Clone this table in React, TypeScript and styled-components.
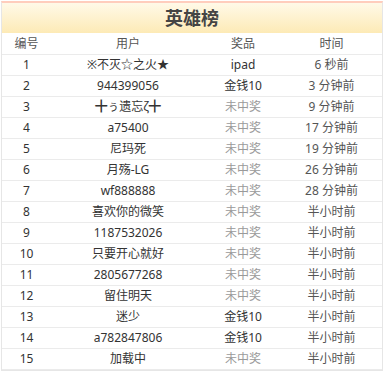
import styled, { createGlobalStyle } from 'styled-components';

type Row = { user: string; prize: string; time: string };

const rows: Row[] = [
  { user: '※不灭☆之火★', prize: 'ipad', time: '6 秒前' },
  { user: '944399056', prize: '金钱10', time: '3 分钟前' },
  { user: '╋ぅ遗忘ζ╋', prize: '未中奖', time: '9 分钟前' },
  { user: 'a75400', prize: '未中奖', time: '17 分钟前' },
  { user: '尼玛死', prize: '未中奖', time: '19 分钟前' },
  { user: '月殇-LG', prize: '未中奖', time: '26 分钟前' },
  { user: 'wf888888', prize: '未中奖', time: '28 分钟前' },
  { user: '喜欢你的微笑', prize: '未中奖', time: '半小时前' },
  { user: '1187532026', prize: '未中奖', time: '半小时前' },
  { user: '只要开心就好', prize: '未中奖', time: '半小时前' },
  { user: '2805677268', prize: '未中奖', time: '半小时前' },
  { user: '留住明天', prize: '未中奖', time: '半小时前' },
  { user: '迷少', prize: '金钱10', time: '半小时前' },
  { user: 'a782847806', prize: '金钱10', time: '半小时前' },
  { user: '加载中', prize: '未中奖', time: '半小时前' },
];

const GlobalStyle = createGlobalStyle`
  body {
    margin: 0;
    background: #ffffff;
    font-family: "Noto Sans", "Noto Sans CJK SC", sans-serif;
  }
`;

export default function App() {
  return (
    <>
      <GlobalStyle />
      <Board>
        <Title>英雄榜</Title>
        <HeadRow>
          <Cell>编号</Cell>
          <Cell>用户</Cell>
          <Cell>奖品</Cell>
          <Cell>时间</Cell>
        </HeadRow>
        {rows.map((r, i) => (
          <DataRow key={i}>
            <Cell>{i + 1}</Cell>
            <Cell>{r.user}</Cell>
            <Cell muted={r.prize === '未中奖'}>{r.prize}</Cell>
            <TimeCell>{r.time}</TimeCell>
          </DataRow>
        ))}
      </Board>
    </>
  );
}

const Board = styled.div`
  width: 380px;
  margin: 1px 0 0 1px;
  border: 1px solid #e6e6e6;
  border-top: 2px solid #ffcdbd;
`;

const Title = styled.div`
  height: 30px;
  line-height: 30px;
  text-align: center;
  font-size: 18px;
  font-weight: 700;
  color: #444444;
  background: linear-gradient(#fff9e8, #fdeab6);
`;

const HeadRow = styled.div`
  display: grid;
  grid-template-columns: 49px 154px 76px 1fr;
  height: 21px;
  line-height: 21px;
  border-bottom: 1px solid #ebebeb;
  font-size: 12px;
  color: #555555;
`;

const DataRow = styled.div`
  display: grid;
  grid-template-columns: 49px 154px 76px 1fr;
  height: 20px;
  line-height: 20px;
  border-bottom: 1px solid #ebebeb;
  font-size: 12px;
  color: #333333;
`;

const Cell = styled.div<{ muted?: boolean }>`
  text-align: center;
  white-space: nowrap;
  color: ${(p) => (p.muted ? '#9a9a9a' : 'inherit')};
`;

const TimeCell = styled.div`
  text-align: center;
  white-space: nowrap;
  color: #555555;
`;
